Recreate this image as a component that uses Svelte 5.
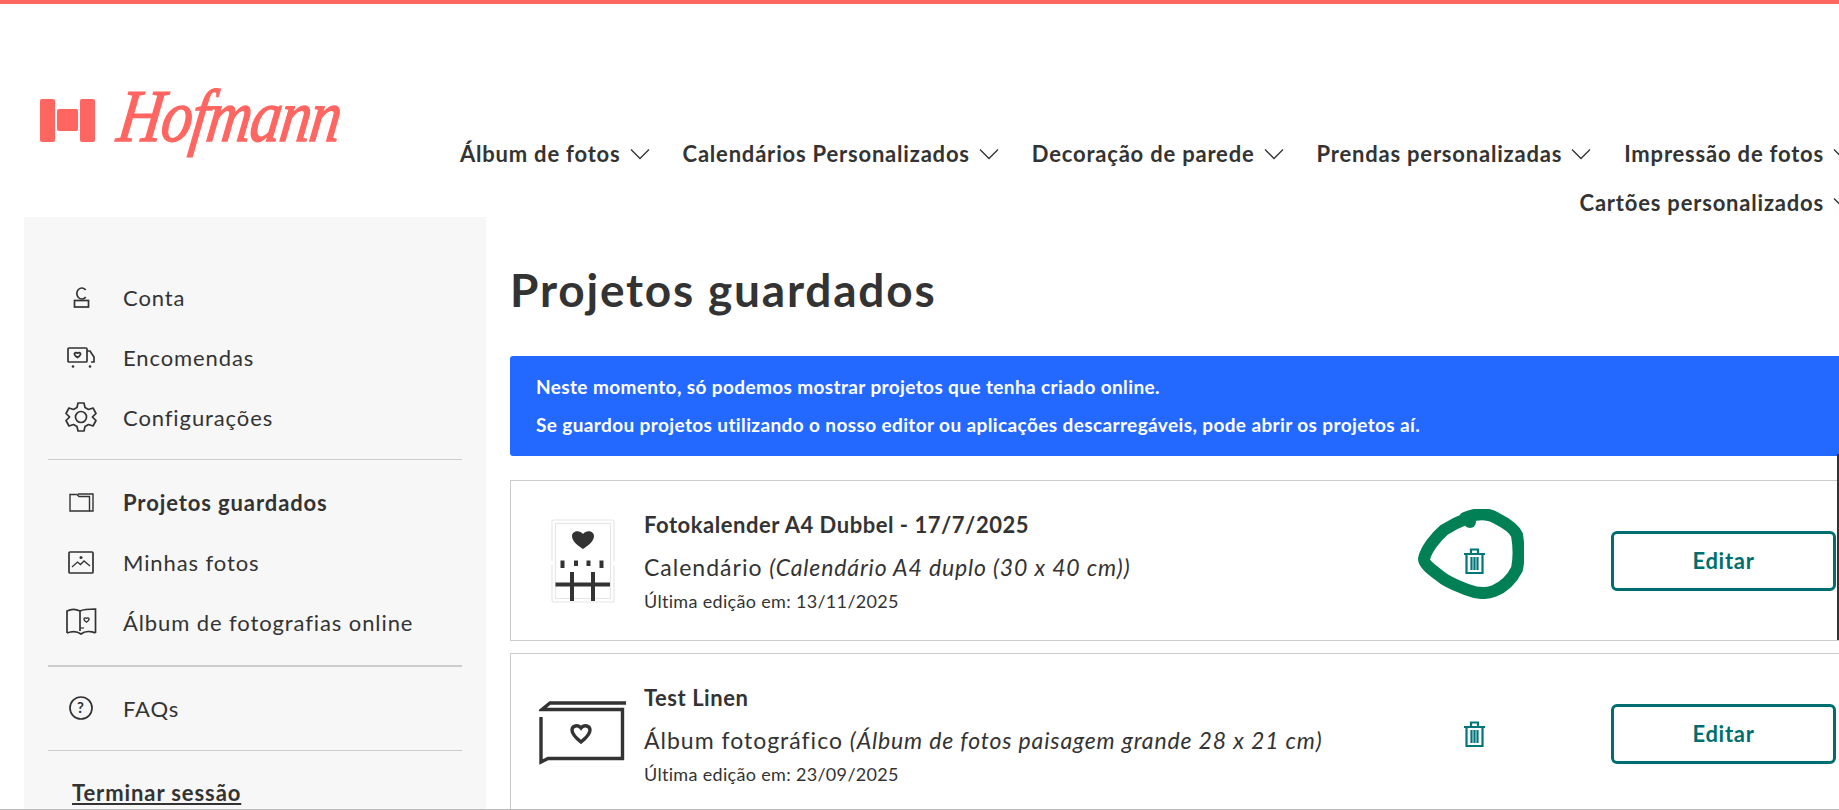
<script>
	const navItems = [
		"Álbum de fotos",
		"Calendários Personalizados",
		"Decoração de parede",
		"Prendas personalizadas",
		"Impressão de fotos",
		"Cartões personalizados"
	];
</script>

<div class="page">
	<div class="topbar"></div>
	<header>
		<div class="logo">
			<svg class="mark" viewBox="0 0 55 43" width="55" height="43">
				<rect x="0" y="0" width="15" height="43" rx="2" />
				<rect x="17" y="10" width="21" height="22" rx="2" />
				<rect x="40" y="0" width="15" height="43" rx="2" />
			</svg>
			<span class="word">Hofmann</span>
		</div>
		<nav>
			{#each navItems as item}
				<a class="nav-item">
					{item}
					<svg viewBox="0 0 20 12" width="20" height="12"><path d="M1 1.5 L10 10.5 L19 1.5" /></svg>
				</a>
			{/each}
		</nav>
	</header>

	<div class="content">
		<aside>
			<ul>
				<li>
					<span class="ico">
						<svg viewBox="0 0 17 21" width="17" height="21">
							<path d="M12.700 3 A5 5.500 0 1 0 12.700 10" /><rect x="1.500" y="13.500" width="14" height="6.500" />
						</svg>
					</span>
					Conta
				</li>
				<li>
					<span class="ico">
						<svg viewBox="0 0 28 21" width="28" height="21">
							<rect x="1" y="1" width="19" height="14" rx="1" />
							<path d="M20 4 H23 L27 10 V15 H24" />
							<path d="M7.500 6.500 C8.500 5 10.500 5.500 10.500 7 C10.500 5.500 12.500 5 13.500 6.500 C14 8 12 9.500 10.500 10.500 C9 9.500 7 8 7.500 6.500 Z" />
							<circle class="dot" cx="6" cy="19.500" r="1.300" /><circle class="dot" cx="23" cy="19.500" r="1.300" />
						</svg>
					</span>
					Encomendas
				</li>
				<li>
					<span class="ico">
						<svg viewBox="0 0 32 32" width="32" height="32">
							<path d="M13 2 H19 L20 6.500 L23.500 8.500 L28 7 L31 12.500 L27.500 15.800 V16.200 L31 19.500 L28 25 L23.500 23.500 L20 25.500 L19 30 H13 L12 25.500 L8.500 23.500 L4 25 L1 19.500 L4.500 16.200 V15.800 L1 12.500 L4 7 L8.500 8.500 L12 6.500 Z" stroke-linejoin="round" />
							<circle cx="16" cy="16" r="5.500" />
						</svg>
					</span>
					Configurações
				</li>
			</ul>
			<hr />
			<ul>
				<li class="active">
					<span class="ico">
						<svg class="thin" viewBox="0 0 25 19" width="25" height="19">
							<path d="M1 18 V1.500 H8 L10 3.500 H20.500 V18 Z" /><path d="M9 1 H24 V18 H20.500" />
						</svg>
					</span>
					Projetos guardados
				</li>
				<li>
					<span class="ico">
						<svg viewBox="0 0 26 23" width="26" height="23">
							<rect x="1" y="1" width="24" height="21" rx="1" />
							<path d="M4 16 L9.500 11 L12.500 13.500 L16 10 L22 15" stroke-width="1.300" />
							<circle class="dot" cx="13" cy="6.500" r="1.500" />
						</svg>
					</span>
					Minhas fotos
				</li>
				<li>
					<span class="ico">
						<svg viewBox="0 0 31 28" width="31" height="28">
							<path d="M1 25 V3 C5 1 10 1 14 3 V23" />
							<path d="M14 3 C18 1 24 1 29.500 1 V25" />
							<path d="M1 25 C6 23 11 23 15 26 C19 23 25 23 29.500 25" />
							<path d="M14 20 H18" stroke-width="1.200" />
							<path d="M18 10.500 C18.700 9.500 20.300 9.800 20.500 11 C20.700 9.800 22.300 9.500 23 10.500 C23.500 12 22 13.200 20.500 14.200 C19 13.200 17.500 12 18 10.500 Z" stroke-width="1.300" />
						</svg>
					</span>
					Álbum de fotografias online
				</li>
			</ul>
			<hr class="thick" />
			<ul>
				<li>
					<span class="ico">
						<svg viewBox="0 0 24 24" width="24" height="24">
							<circle cx="12" cy="12" r="11" />
							<text x="12" y="17" text-anchor="middle">?</text>
						</svg>
					</span>
					FAQs
				</li>
			</ul>
			<hr class="last" />
			<a class="logout">Terminar sessão</a>
		</aside>

		<main>
			<h1>Projetos guardados</h1>
			<div class="banner">
				<p>Neste momento, só podemos mostrar projetos que tenha criado online.</p>
				<p>Se guardou projetos utilizando o nosso editor ou aplicações descarregáveis, pode abrir os projetos aí.</p>
			</div>

			<section class="card">
				<div class="thumb">
					<svg viewBox="0 0 64 84" width="64" height="84">
						<path class="faint" d="M1 42 V3 Q1 1 3 1 H61 Q63 1 63 3 V42 M63 46 V81 Q63 83 61 83 H3 Q1 83 1 81 V46" />
						<rect class="faint" x="4.500" y="4.500" width="55" height="75" />
						<path class="solid" d="M32 30 C26 26 21 22 21 17 C21 12.500 28 10 32 15 C36 10 43 12.500 43 17 C43 22 38 26 32 30 Z" />
						<path class="bars" d="M11.500 41.500 V49 M25 41.500 V47 M37.500 41.500 V47 M50.500 41.500 V49" />
						<path class="bars" d="M21 53 V82 M42 53 V82 M4.500 65.500 H59" />
					</svg>
				</div>
				<div class="info">
					<div class="title">Fotokalender A4 Dubbel - 17/7/2025</div>
					<div class="sub">Calendário <em>(Calendário A4 duplo (30 x 40 cm))</em></div>
					<div class="date">Última edição em: 13/11/2025</div>
				</div>
				<div class="trash">
					<svg class="scribble" viewBox="0 0 106 90" width="106" height="90">
						<path d="M47 9 C58 4 70 4 78 9 C88 14 96 19 99 26 C101 38 101 50 99 60 C94 70 86 78 76 82 C68 85 60 85 50 81 C40 77 30 74 22 67 C14 61 6 55 6 50 C8 40 18 28 26 21 C34 16 42 12 50 9" />
						<circle cx="52" cy="13" r="6" />
					</svg>
					<svg class="bin" viewBox="0 0 21 26" width="21" height="26">
						<path d="M0 6 H21 M7 6 V1.500 H14 V6 M2.500 6 V25 H18.500 V6 M7.500 9 V22 M10.500 9 V22 M13.500 9 V22" />
					</svg>
				</div>
				<button>Editar</button>
			</section>

			<section class="card">
				<div class="thumb">
					<svg viewBox="0 0 88 65" width="88" height="65">
						<path class="outline" d="M87 2 H11 L3 8.500 H83.500 V57.500 H9 L2 61 V16" />
						<path class="outline" d="M42 41 C37 37 33 33 33 29 C33 25 39 23 42 27 C45 23 51 25 51 29 C51 33 47 37 42 41 Z" />
					</svg>
				</div>
				<div class="info">
					<div class="title">Test Linen</div>
					<div class="sub">Álbum fotográfico <em>(Álbum de fotos paisagem grande 28 x 21 cm)</em></div>
					<div class="date">Última edição em: 23/09/2025</div>
				</div>
				<div class="trash">
					<svg class="bin" viewBox="0 0 21 26" width="21" height="26">
						<path d="M0 6 H21 M7 6 V1.500 H14 V6 M2.500 6 V25 H18.500 V6 M7.500 9 V22 M10.500 9 V22 M13.500 9 V22" />
					</svg>
				</div>
				<button>Editar</button>
			</section>
		</main>
	</div>
	<div class="edge-mark"></div>
</div>

<style>
	:global(body) {
		margin: 0;
		background: #fff;
	}
	.page {
		position: relative;
		height: 810px;
		box-sizing: border-box;
		overflow: hidden;
		border-bottom: 1px solid #bbb;
		font-family: Lato, "Liberation Sans", sans-serif;
		color: #333;
	}
	.topbar {
		height: 4px;
		background: #ff6661;
	}
	header {
		position: relative;
		height: 213px;
	}
	.logo {
		display: flex;
		align-items: flex-start;
		padding: 95px 0 0 40px;
		color: #ff6661;
	}
	.mark {
		fill: #ff6661;
	}
	.word {
		margin: -33px 0 0 24px;
		font-family: "Liberation Serif", serif;
		font-style: italic;
		font-size: 62px;
		line-height: 100px;
		letter-spacing: -1.300px;
		-webkit-text-stroke: 1.2px #ff6661;
		transform: skewX(-8deg) scaleY(1.2);
	}
	nav {
		position: absolute;
		left: 440px;
		right: -14px;
		top: 126px;
		display: flex;
		flex-wrap: wrap;
		justify-content: flex-end;
		column-gap: 33px;
	}
	.nav-item {
		display: flex;
		align-items: center;
		gap: 9px;
		height: 49px;
		padding-bottom: 2px;
		box-sizing: border-box;
		font-size: 22px;
		font-weight: 700;
		letter-spacing: 0.8px;
		white-space: nowrap;
	}
	.nav-item svg path {
		fill: none;
		stroke: #333;
		stroke-width: 1.3;
	}
	.content {
		display: flex;
	}
	aside {
		width: 462px;
		height: 600px;
		flex-shrink: 0;
		margin-left: 24px;
		box-sizing: border-box;
		padding: 51px 24px 0;
		background: #f7f7f7;
		font-size: 22px;
		letter-spacing: 0.9px;
	}
	ul {
		margin: 0;
		padding: 0;
		list-style: none;
	}
	li {
		display: flex;
		align-items: center;
		height: 60px;
		padding-bottom: 2px;
		box-sizing: border-box;
		white-space: nowrap;
	}
	.ico {
		display: flex;
		justify-content: center;
		width: 66px;
		margin-right: 9px;
	}
	.ico svg {
		fill: none;
		stroke: #333;
		stroke-width: 1.7;
	}
	.ico svg.thin {
		stroke-width: 1.400;
	}
	.ico .dot {
		fill: #333;
		stroke: none;
	}
	.ico text {
		fill: #333;
		stroke: none;
		font-size: 15px;
		font-weight: 700;
	}
	.active {
		font-weight: 700;
	}
	hr {
		height: 1px;
		border: 0;
		margin: 11px 0 13px;
		background: #ccc;
	}
	hr.thick {
		height: 2px;
		margin: 12px 0 12px;
	}
	hr.last {
		margin: 11px 0 27px;
	}
	.logout {
		display: inline-block;
		margin-left: 24px;
		line-height: 30px;
		font-weight: 700;
		text-decoration: underline;
	}
	main {
		flex: 1;
		min-width: 0;
		margin-left: 24px;
		padding-top: 43px;
	}
	h1 {
		margin: 0 0 36px;
		font-size: 46px;
		line-height: 60px;
		font-weight: 700;
		letter-spacing: 1.8px;
	}
	.banner {
		height: 100px;
		box-sizing: border-box;
		padding: 12px 0 0 26px;
		margin-right: -2px;
		border-radius: 3px;
		background: #2469ff;
		color: #fff;
		font-size: 19px;
		font-weight: 700;
		letter-spacing: 0.38px;
	}
	.banner p {
		margin: 0;
		line-height: 38px;
	}
	.card {
		display: flex;
		align-items: center;
		height: 161px;
		box-sizing: border-box;
		margin: 24px -2px 12px 0;
		border: 1px solid #ccc;
	}
	.card + .card {
		margin-top: 12px;
	}
	.thumb {
		display: flex;
		justify-content: center;
		width: 96px;
		margin-left: 24px;
		margin-right: 13px;
	}
	.faint {
		fill: none;
		stroke: #e6e6e6;
		stroke-width: 1.2;
	}
	.solid {
		fill: #333;
	}
	.bars {
		fill: none;
		stroke: #333;
		stroke-width: 4;
	}
	.outline {
		fill: none;
		stroke: #333;
		stroke-width: 3.400;
	}
	.info {
		flex: 1;
		padding-top: 5px;
		white-space: nowrap;
	}
	.title {
		height: 30px;
		line-height: 30px;
		font-size: 22px;
		font-weight: 700;
		letter-spacing: 0.53px;
	}
	.sub {
		height: 30px;
		margin-top: 12px;
		line-height: 30px;
		font-size: 23px;
		letter-spacing: 1px;
	}
	.sub em {
		letter-spacing: 0.85px;
	}
	.date {
		height: 30px;
		margin-top: 4px;
		line-height: 30px;
		font-size: 18px;
		letter-spacing: 0.32px;
	}
	.trash {
		position: relative;
		display: flex;
		justify-content: center;
		width: 21px;
		margin-right: 126px;
	}
	.bin {
		fill: none;
		stroke: #00767a;
		stroke-width: 2.200;
	}
	.scribble {
		position: absolute;
		left: -46px;
		top: -39px;
		fill: none;
		stroke: #028055;
		stroke-width: 12;
		stroke-linecap: round;
	}
	.scribble circle {
		fill: #028055;
		stroke: none;
	}
	button {
		width: 225px;
		height: 60px;
		margin-right: 4px;
		box-sizing: border-box;
		border: 3px solid #006e6e;
		border-radius: 6px;
		background: #fff;
		color: #006e6e;
		font-family: inherit;
		font-size: 22px;
		font-weight: 700;
		letter-spacing: 0.7px;
	}
	.edge-mark {
		position: absolute;
		right: 0;
		top: 454px;
		width: 2px;
		height: 186px;
		background: #333;
	}
</style>
